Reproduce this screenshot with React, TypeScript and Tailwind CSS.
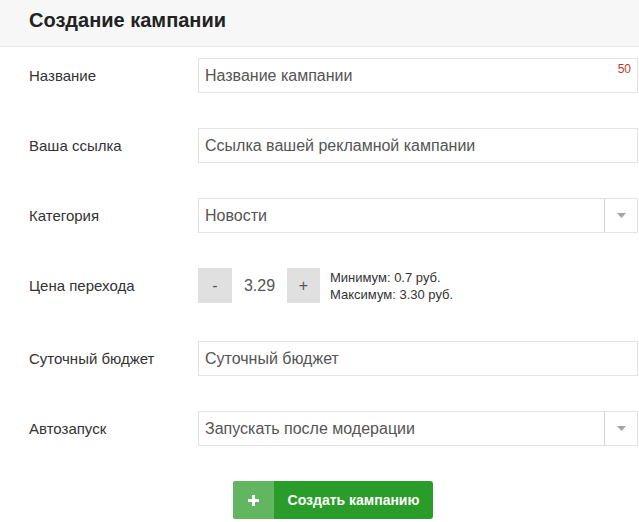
import React, { useState } from 'react';

const font = { fontFamily: '"Liberation Sans", Arial, sans-serif' };

const Row: React.FC<{ label: string; className?: string; children: React.ReactNode }> = ({ label, className, children }) => (
  <div className={`flex items-center h-[35px] ${className ?? ''}`}>
    <div className="w-[198px] shrink-0 pl-[29px] pt-[2px] text-[15px] text-[#333]">{label}</div>
    <div className="flex-1 h-full pr-[1px]">{children}</div>
  </div>
);

const TextInput: React.FC<{ placeholder: string; counter?: string }> = ({ placeholder, counter }) => (
  <div className="relative h-full border border-[#e3e3e3] bg-white">
    <input
      placeholder={placeholder}
      className="w-full h-full px-[6px] text-[16px] text-[#555] placeholder:text-[#555] outline-none bg-transparent"
    />
    {counter && (
      <span className="absolute right-[6px] top-[4px] text-[12px] leading-none text-[#c0392b]">{counter}</span>
    )}
  </div>
);

const SelectBox: React.FC<{ value: string }> = ({ value }) => (
  <div className="flex h-full border border-[#e3e3e3] bg-white">
    <div className="flex-1 flex items-center px-[6px] text-[16px] text-[#555]">{value}</div>
    <div className="w-[33px] border-l border-[#d4d4d4] flex items-center justify-center">
      <svg width="9" height="5" viewBox="0 0 9 5"><path d="M0 0h9L4.5 5z" fill="#a3a3a3" /></svg>
    </div>
  </div>
);

export default function App() {
  const [price, setPrice] = useState(3.29);

  return (
    <div className="w-[639px] min-h-[522px] bg-white" style={font}>
      <div className="h-[47px] bg-[#f7f7f7] border-b border-[#e8e8e8] px-[29px] pt-[9px]">
        <h1 className="text-[20px] leading-[22px] font-bold text-[#222]">Создание кампании</h1>
      </div>

      <Row label="Название" className="mt-[11px]">
        <TextInput placeholder="Название кампании" counter="50" />
      </Row>

      <Row label="Ваша ссылка" className="mt-[35px]">
        <TextInput placeholder="Ссылка вашей рекламной кампании" />
      </Row>

      <Row label="Категория" className="mt-[35px]">
        <SelectBox value="Новости" />
      </Row>

      <Row label="Цена перехода" className="mt-[35px]">
        <div className="flex h-full items-center">
          <button
            onClick={() => setPrice((p) => Math.max(0.7, +(p - 0.01).toFixed(2)))}
            className="w-[34px] h-full bg-[#e0e0e0] text-[16px] text-[#555]"
          >
            -
          </button>
          <div className="w-[55px] h-full flex items-center justify-center bg-white text-[16px] text-[#555]">
            {price.toFixed(2)}
          </div>
          <button
            onClick={() => setPrice((p) => Math.min(3.3, +(p + 0.01).toFixed(2)))}
            className="w-[33px] h-full bg-[#e0e0e0] text-[16px] text-[#555]"
          >
            +
          </button>
          <div className="ml-[10px] text-[13px] leading-[17px] text-[#333]">
            <div>Минимум: 0.7 руб.</div>
            <div>Максимум: 3.30 руб.</div>
          </div>
        </div>
      </Row>

      <Row label="Суточный бюджет" className="mt-[38px]">
        <TextInput placeholder="Суточный бюджет" />
      </Row>

      <Row label="Автозапуск" className="mt-[35px]">
        <SelectBox value="Запускать после модерации" />
      </Row>

      <div className="pl-[233px] mt-[35px]">
        <button className="flex h-[38px] w-[200px] rounded-[3px] overflow-hidden bg-[#2a9c2a] text-white">
          <span className="w-[41px] h-full bg-[#62b662] flex items-center justify-center">
            <svg width="11" height="11" viewBox="0 0 11 11"><path d="M4 0h3v4h4v3H7v4H4V7H0V4h4z" fill="#fff" /></svg>
          </span>
          <span className="flex-1 flex items-center justify-center text-[14px] font-bold">Создать кампанию</span>
        </button>
      </div>
    </div>
  );
}
